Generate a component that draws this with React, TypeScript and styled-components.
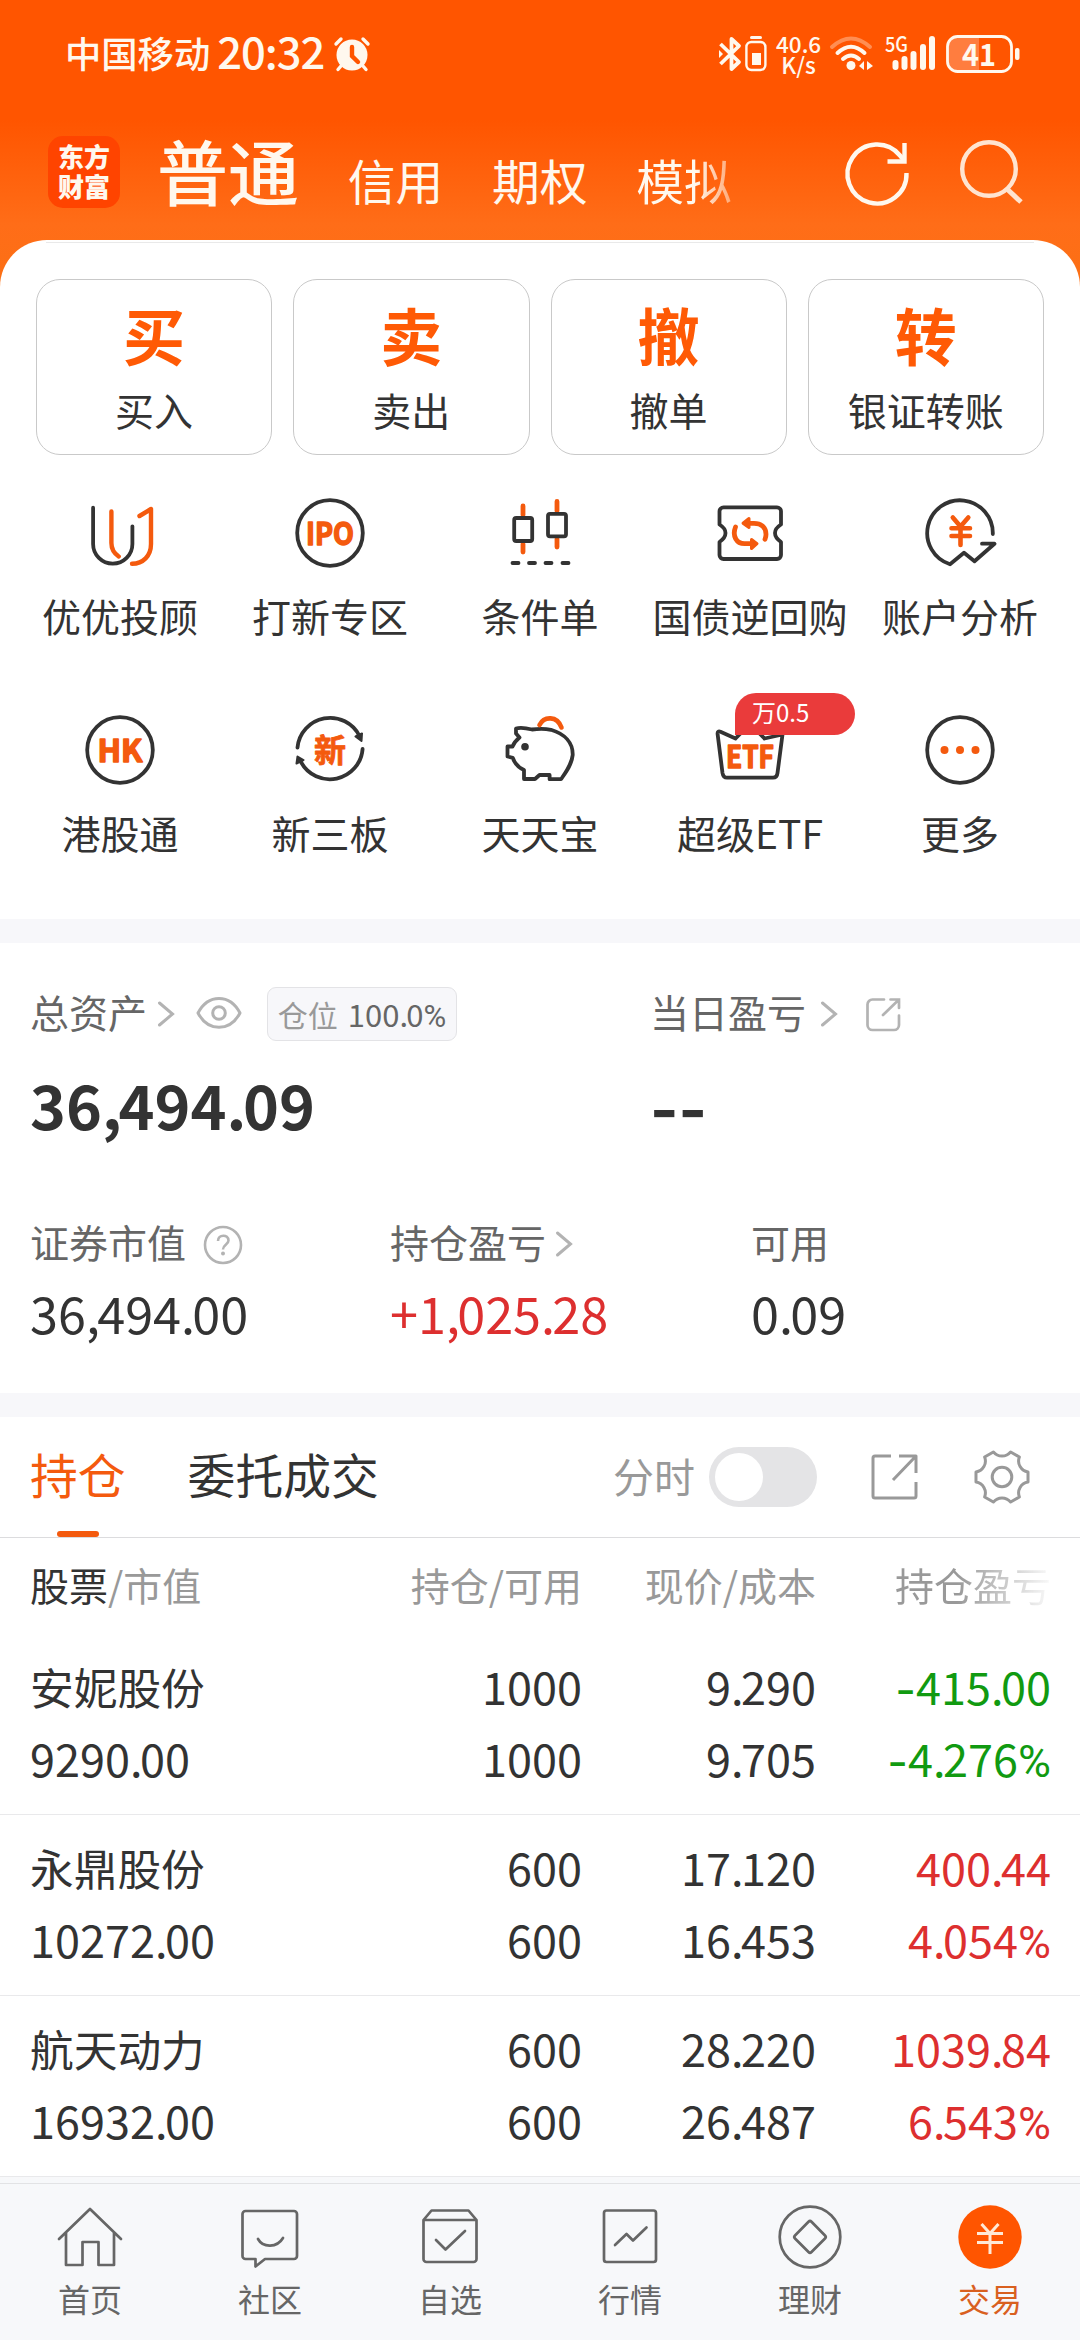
import React from "react";
import styled, { createGlobalStyle } from "styled-components";

const GlobalStyle = createGlobalStyle`
  * { box-sizing: border-box; }
  body {
    margin: 0;
    background: #fff;
    font-family: "Noto Sans CJK SC", "Noto Sans", sans-serif;
    color: #333;
  }
  svg { overflow: visible; flex: none; }
`;

const ORANGE = "#f45a0e";
const DARK = "#333";

/* ---------- page shell ---------- */

const Page = styled.div`
  width: 1080px;
  height: 2340px;
  overflow: hidden;
  display: flex;
  flex-direction: column;
  background: linear-gradient(#ff5500 0, #ff5500 120px, #ff6d18 225px, #fb7014 290px) no-repeat top / 100% 290px;
`;

const StatusBar = styled.header`
  height: 108px;
  flex: none;
  display: flex;
  align-items: center;
  justify-content: space-between;
  padding: 0 59px 0 65px;
  color: #fff8ee;
`;

const StatusGroup = styled.div`
  display: flex;
  align-items: center;
`;

const Carrier = styled.span`
  font-size: 36.3px;
  font-weight: 500;
  line-height: 50px;
  margin: -4px 7px 0 0;
`;

const Clock = styled.span`
  font-size: 43.5px;
  font-weight: 500;
  line-height: 50px;
  margin: -6px 10px 0 0;
  letter-spacing: -1px;
`;

const NetSpeed = styled.div`
  width: 45px;
  margin: -1px 8px 0 9px;
  font-size: 22.5px;
  font-weight: 500;
  line-height: 21px;
  text-align: center;
`;

const Nav = styled.nav`
  height: 132px;
  flex: none;
  display: flex;
  align-items: flex-start;
  padding: 28px 55px 0 48px;
  color: #fff8ee;
`;

const Logo = styled.div`
  width: 72px;
  height: 72px;
  border-radius: 15px;
  background: #ff4400;
  padding-top: 5px;
  text-align: center;
  font-size: 26px;
  font-weight: 900;
  line-height: 30px;
`;

const NavTabs = styled.div`
  display: flex;
  align-items: baseline;
  width: 580px;
  margin: -17px 0 0 37px;
  white-space: nowrap;
`;

const NavTab = styled.span<{ $active?: boolean; $fade?: boolean }>`
  font-size: ${(p) => (p.$active ? 71 : 47.8)}px;
  font-weight: ${(p) => (p.$active ? 500 : 400)};
  line-height: 100px;
  margin-right: 48.7px;
  ${(p) =>
    p.$fade &&
    `background: linear-gradient(90deg, #fff8ee 62%, rgba(255, 248, 238, 0.45) 100%);
     background-clip: text; color: transparent;`}
`;

const NavIcons = styled.div`
  display: flex;
  margin-left: auto;
  gap: 49px;
`;

/* ---------- main panel ---------- */

const Panel = styled.main`
  flex: 1;
  background: #fff;
  border-radius: 47px 47px 0 0;
  display: flex;
  flex-direction: column;
`;

const Hairline = styled.div`
  height: 1px;
  margin: 2px 46px 0;
  background: #e9e9e9;
  flex: none;
`;

const Actions = styled.section`
  display: grid;
  grid-template-columns: repeat(4, 1fr);
  gap: 21px;
  padding: 36px 36px 0;
`;

const ActionCard = styled.button`
  height: 176px;
  border: 1px solid #c9c9c9;
  border-radius: 24px;
  background: #fff;
  padding: 18px 0 0;
  display: flex;
  flex-direction: column;
  align-items: center;
  font-family: inherit;
  color: ${DARK};
`;

const ActionGlyph = styled.span`
  font-size: 62px;
  font-weight: 700;
  line-height: 72px;
  color: #ff5a05;
`;

const Label = styled.span`
  font-size: 39px;
  line-height: 50px;
  white-space: nowrap;
`;

const ActionLabel = styled(Label)`
  margin-top: 14px;
`;

const Shortcuts = styled.section`
  display: grid;
  grid-template-columns: repeat(5, 210px);
  grid-auto-rows: 217px;
  justify-content: center;
  height: 464px;
  padding-top: 39px;
  flex: none;
`;

const Shortcut = styled.div`
  display: flex;
  flex-direction: column;
  align-items: center;
  gap: 18px;
  position: relative;
`;

const DiscountTag = styled.span`
  position: absolute;
  left: 90px;
  top: -18px;
  width: 120px;
  height: 42px;
  border-radius: 21px 21px 21px 0;
  background: #ea3b3b;
  color: #fff;
  font-size: 24px;
  line-height: 38px;
  padding-left: 17px;
`;

const Band = styled.div`
  height: 24px;
  background: #f7f7fa;
  flex: none;
`;

/* ---------- figures ---------- */

const Tight = styled.span`
  letter-spacing: -0.055em;
`;

const PercentSign = styled.span`
  font-family: Roboto, sans-serif;
  line-height: 0;
`;

const MinusSign = styled.span`
  font-family: Inter, sans-serif;
  line-height: 0;
  vertical-align: -0.03em;
`;

const Num = ({ children }: { children: string }) => (
  <span>
    {children.split(/([.,%-])/).map((part, i) => {
      if (part === "." || part === ",") return <Tight key={i}>{part}</Tight>;
      if (part === "%") return <PercentSign key={i}>{part}</PercentSign>;
      if (part === "-") return <MinusSign key={i}>{part}</MinusSign>;
      return part;
    })}
  </span>
);

/* ---------- assets ---------- */

const Assets = styled.section`
  height: 450px;
  flex: none;
  padding: 43px 30px 0;
`;

const TotalRow = styled.div`
  display: grid;
  grid-template-columns: 620px 1fr;
  height: 158px;
`;

const SummaryRow = styled.div`
  display: grid;
  grid-template-columns: 360px 361px 1fr;
  margin-top: 72px;
`;

const FieldHead = styled.div`
  height: 56px;
  display: flex;
  align-items: center;
  color: #666;
`;

const FieldName = styled(Label)`
  margin-top: -6px;
`;

const PositionChip = styled.span`
  width: 190px;
  height: 54px;
  margin-left: 25px;
  border: 1px solid #e3e3e6;
  border-radius: 9px;
  background: #f7f7fa;
  display: flex;
  align-items: center;
  justify-content: center;
  gap: 10px;
  font-size: 31px;
  line-height: 48px;
  color: #666;
  padding-bottom: 1px;
`;

const ChipName = styled.span`
  font-size: 30px;
  color: #999;
`;

const Total = styled.div`
  font-size: 61px;
  font-weight: 700;
  line-height: 80px;
  margin-top: 22px;
`;

const Amount = styled.div<{ $color?: string }>`
  font-size: 50.4px;
  line-height: 66px;
  margin-top: 8px;
  color: ${(p) => p.$color ?? DARK};
`;

/* ---------- holdings ---------- */

const TabsRow = styled.div`
  height: 121px;
  flex: none;
  border-bottom: 1px solid #dcdcde;
  display: flex;
  align-items: center;
  padding: 0 49px 0 30px;
`;

const Tab = styled.div<{ $active?: boolean }>`
  height: 120px;
  font-size: 47.8px;
  line-height: 114px;
  margin-right: 62px;
  color: ${(p) => (p.$active ? ORANGE : DARK)};
  display: flex;
  flex-direction: column;
  align-items: center;
`;

const TabMark = styled.i`
  width: 42px;
  height: 6px;
  border-radius: 3px;
  background: ${ORANGE};
`;

const Tools = styled.div`
  display: flex;
  align-items: center;
  margin-left: auto;
`;

const ToolLabel = styled.span`
  font-size: 41px;
  line-height: 60px;
  margin: -5px 14px 0 0;
  color: #999;
`;

const Switch = styled.span`
  width: 108px;
  height: 60px;
  border-radius: 30px;
  background: #e4e4e6;
  padding: 6px;
  margin-right: 54px;
`;

const Knob = styled.i`
  display: block;
  width: 48px;
  height: 48px;
  border-radius: 50%;
  background: #fff;
`;

const columns = `
  display: grid;
  grid-template-columns: 280px 272px 234px 235px;
  padding-left: 30px;
`;

const TableHead = styled.div`
  ${columns}
  height: 96px;
  flex: none;
  font-size: 39px;
  line-height: 92px;
  color: #999;
`;

const HeadCell = styled.span<{ $fade?: boolean }>`
  text-align: right;
  white-space: nowrap;
  ${(p) =>
    p.$fade &&
    `background: linear-gradient(90deg, #999 60%, rgba(153, 153, 153, 0.05) 100%);
     background-clip: text; color: transparent;`}
`;

const StockHead = styled.span`
  b { font-weight: 400; color: ${DARK}; }
`;

const HoldingRow = styled.div`
  ${columns}
  height: 181px;
  flex: none;
  padding-top: 16px;
  border-bottom: 1px solid #e9e9eb;
  font-size: 45px;
  line-height: 72px;
`;

const Cell = styled.div<{ $color?: string; $left?: boolean }>`
  display: flex;
  flex-direction: column;
  align-items: ${(p) => (p.$left ? "flex-start" : "flex-end")};
  color: ${(p) => p.$color ?? DARK};
`;

const StockName = styled.span`
  font-size: 43.7px;
`;

/* ---------- bottom bar ---------- */

const BottomBar = styled.footer`
  height: 163px;
  flex: none;
  background: #f7f8fa;
  padding-top: 6px;
`;

const BottomItems = styled.div`
  border-top: 1px solid #e2e3e5;
  height: 157px;
  display: grid;
  grid-template-columns: repeat(6, 180px);
`;

const BottomItem = styled.div<{ $active?: boolean }>`
  display: flex;
  flex-direction: column;
  align-items: center;
  padding-top: 19px;
  font-size: 32px;
  line-height: 44px;
  color: ${(p) => (p.$active ? "#d9601f" : "#666")};
  svg { margin-bottom: 3px; }
`;

/* ---------- icons ---------- */

const AlarmIcon = () => (
  <svg width="36" height="36" viewBox="0 0 36 36" fill="none" stroke="currentColor" strokeLinecap="round">
    <circle cx="18" cy="19" r="15.5" fill="currentColor" stroke="none" />
    <path d="M2 8L7 3M34 8L29 3M7 30L4 33.5M29 30L32 33.5" strokeWidth="3.4" />
    <path d="M18 11V20L24 26" stroke="#ff5500" strokeWidth="4.4" />
  </svg>
);

const BluetoothIcon = () => (
  <svg width="23" height="36" viewBox="0 0 23 36" fill="none" stroke="currentColor" strokeWidth="3.8" strokeLinejoin="round">
    <path d="M1.500 8L20 26L12.500 33V3L20 10L1.500 28" />
    <path d="M0 14L4 18L0 22Z" fill="currentColor" stroke="none" />
  </svg>
);

const DeviceBatteryIcon = () => (
  <svg width="22" height="36" viewBox="0 0 22 36" style={{ marginLeft: 3 }}>
    <rect x="5" y="0" width="12" height="3" rx="1.5" fill="currentColor" />
    <rect x="1.4" y="6" width="19" height="28" rx="5" fill="none" stroke="currentColor" strokeWidth="2.4" />
    <rect x="7" y="17" width="9" height="12" fill="currentColor" />
  </svg>
);

const WifiIcon = () => (
  <svg width="46" height="36" viewBox="0 0 46 36" fill="none" stroke="currentColor" strokeWidth="4" strokeLinecap="round">
    <path d="M3 11Q22 -6 41 11" opacity=".35" />
    <path d="M8.500 17Q22 4.500 35.500 17" />
    <path d="M14 23Q22 16 30 23" />
    <circle cx="22" cy="29.500" r="4.500" fill="currentColor" stroke="none" />
    <path d="M30 30L35 25V34ZM44 30L38 25V34Z" fill="currentColor" stroke="none" />
  </svg>
);

const SignalIcon = () => (
  <svg width="52" height="38" viewBox="0 0 52 38" fill="currentColor" style={{ margin: "0 9px 0 10px" }}>
    <text x="0" y="17" fontSize="21" fontWeight="500" textLength="23" lengthAdjust="spacingAndGlyphs">5G</text>
    <rect x="7.500" y="25" width="6" height="10" rx="3" />
    <rect x="16.500" y="21" width="6" height="14" rx="3" />
    <rect x="25.500" y="16" width="6" height="19" rx="3" />
    <rect x="35" y="9" width="6" height="26" rx="3" />
    <rect x="44" y="1" width="6" height="34" rx="3" />
  </svg>
);

const BatteryIcon = () => (
  <svg width="75" height="38" viewBox="0 0 75 38">
    <path d="M12 2H33V36H12A10 10 0 0 1 2 26V12A10 10 0 0 1 12 2Z" fill="#ff7d3f" />
    <rect x="1.500" y="1.500" width="64" height="35" rx="10" fill="none" stroke="currentColor" strokeWidth="2.800" />
    <rect x="69" y="13" width="4.500" height="12" rx="2" fill="currentColor" />
    <text x="33" y="30.500" textAnchor="middle" fontSize="31" fontWeight="700" fill="currentColor" textLength="34" lengthAdjust="spacingAndGlyphs">41</text>
  </svg>
);

const RefreshIcon = () => (
  <svg width="64" height="66" viewBox="0 0 64 66" fill="none" stroke="currentColor" strokeWidth="4.400" style={{ marginTop: 4 }}>
    <path d="M60.500 33A29.500 29.500 0 1 1 54 15.500L58.500 21" />
    <path d="M58.500 3V21.500H41.500" />
  </svg>
);

const SearchIcon = () => (
  <svg width="66" height="66" viewBox="0 0 66 66" fill="none" stroke="#ffe4d0" strokeWidth="4.400" style={{ marginTop: 3 }}>
    <circle cx="30" cy="30" r="26.800" />
    <path d="M48 50L62 63" strokeWidth="5" />
  </svg>
);

const Glyph = ({ children }: { children: React.ReactNode }) => (
  <svg width="78" height="78" viewBox="0 0 78 78" fill="none" stroke={DARK} strokeWidth="3.800" strokeLinecap="round" strokeLinejoin="round">
    {children}
  </svg>
);

const Word = ({ text, y, width, size = 31, spread = 1.5 }: { text: string; y: number; width: number; size?: number; spread?: number }) => (
  <text
    x={39 - width / 2}
    y={y}
    fontSize={size}
    fontWeight="700"
    fill={ORANGE}
    stroke={ORANGE}
    strokeWidth={spread}
    textLength={width}
    lengthAdjust="spacingAndGlyphs"
  >
    {text}
  </text>
);

const AdvisorIcon = () => (
  <Glyph>
    <path d="M12.100 13.700V50a19.650 19.650 0 0 0 39.300 0V32.300" />
    <path d="M30.400 17.500V49c0 6 3 10.500 7.300 13.500M58.500 22L70 15V50c0 12-8 19.700-19 19.700" stroke={ORANGE} strokeWidth="4.400" />
  </Glyph>
);

const IpoIcon = () => (
  <Glyph>
    <circle cx="39" cy="39" r="32.800" />
    <Word text="IPO" y={50.5} width={48} />
  </Glyph>
);

const CandleIcon = () => (
  <Glyph>
    <path d="M22 12V21M22 50V58M56 7.500V17M56 45V53" stroke={ORANGE} strokeWidth="4.800" />
    <rect x="13.200" y="24" width="18" height="23" rx="2" />
    <rect x="47" y="19.800" width="18" height="22.500" rx="2" />
    <path d="M11.500 69H17.500M28 69H34M44.500 69H50.500M61.500 69H67.500" />
  </Glyph>
);

const RepoIcon = () => (
  <Glyph>
    <path d="M12.500 13.300H66a4 4 0 0 1 4 4V30.500c-8 5-8 12 0 17.500V61a4 4 0 0 1-4 4H12.500a4 4 0 0 1-4-4V48c8-5.500 8-12.500 0-17.500V17.300a4 4 0 0 1 4-4Z" />
    <g stroke={ORANGE} strokeWidth="4.800">
      <path d="M38 29.300H43c8 0 12 5 12 11 0 2-.3 3.500-1 5M24.500 33c-3.500 9 1 16.700 9 16.700H41" />
      <path d="M38 24.500L32 29.200L38 33.500ZM40.500 45.500L46 49.700L40.500 54.500Z" fill={ORANGE} strokeWidth="3" />
    </g>
  </Glyph>
);

const AccountIcon = () => (
  <Glyph>
    <path d="M71.800 40A32.800 32.800 0 1 0 29 70.300L43 58.700L53.500 67.300L73.500 49.700H61" />
    <path d="M31.800 23.500L39.500 32.500L47.300 23.500M39.500 33V51M30.500 34.200H49M30.500 42H49" stroke={ORANGE} strokeWidth="4.600" />
  </Glyph>
);

const HkIcon = () => (
  <Glyph>
    <circle cx="39" cy="39" r="32.800" />
    <Word text="HK" y={50.5} width={45} />
  </Glyph>
);

const NewBoardIcon = () => (
  <Glyph>
    <path d="M6.500 36.500A32.800 32.800 0 0 1 68.500 25M71.600 38A32.800 32.800 0 0 1 10 51" />
    <path d="M64.500 25.500L71 22.500L70.500 30ZM6.500 45.500L12.500 49L5.500 52.500Z" fill={DARK} strokeWidth="2" />
    <Word text="新" y={50.5} width={32} size={32} spread={0.8} />
  </Glyph>
);

const PigIcon = () => (
  <Glyph>
    <path d="M15 17.500C20 16 27 17.500 31 18.500C38 17.500 44 17.500 50 18.800C64 23 72 32 71.700 44C70.500 54 65 61 60 68.200H48.600V64H38.500L34 68H23V59C17.500 56.500 13.500 52 11.800 46.800L6.500 45.500V35.500H11.500C13 31.500 15.500 29 18.500 26.500L15 22.500Z" />
    <circle cx="24" cy="35.700" r="3.800" fill={DARK} stroke="none" />
    <path d="M38.500 14C43 5 56 4.500 60.500 16.500" stroke={ORANGE} strokeWidth="4.600" />
  </Glyph>
);

const EtfIcon = () => (
  <Glyph>
    <path d="M24.500 27.500L9.500 20.800Q6.300 19.700 6.600 23L11.500 62Q12.200 66.700 16 66.700H62Q66 66.700 66.500 62L71.500 23.500L53.500 27.500M24.500 27.500L39 13L53.500 27.500" />
    <Word text="ETF" y={57} width={48} />
  </Glyph>
);

const MoreIcon = () => (
  <Glyph>
    <circle cx="39" cy="39" r="32.800" />
    <g fill={ORANGE} stroke="none">
      <circle cx="23.500" cy="39" r="4" />
      <circle cx="39" cy="39" r="4" />
      <circle cx="54.500" cy="39" r="4" />
    </g>
  </Glyph>
);

const Chevron = ({ gap }: { gap: number }) => (
  <svg width="18" height="28" viewBox="0 0 18 28" fill="none" stroke="#b3b3b3" strokeWidth="3" strokeLinecap="round" style={{ marginLeft: gap }}>
    <path d="M2.500 3L15.500 14L2.500 25" />
  </svg>
);

const EyeIcon = () => (
  <svg width="46" height="34" viewBox="0 0 46 34" fill="none" stroke="#b3b3b3" strokeWidth="3" strokeLinejoin="round" style={{ margin: "-2px 0 0 21px" }}>
    <path d="M2 17C12-2.500 34-2.500 44 17C34 36 12 36 2 17Z" />
    <circle cx="23" cy="17" r="6.300" />
  </svg>
);

const HelpIcon = () => (
  <svg width="40" height="40" viewBox="0 0 40 40" fill="none" stroke="#b3b3b3" strokeWidth="2.600" style={{ margin: "1px 0 0 17px" }}>
    <circle cx="20" cy="20" r="18" />
    <path d="M15 16C15 9 25.500 9 25.500 15.500C25.500 19.500 20 19.500 20 24.500" />
    <circle cx="20" cy="28.500" r="2" fill="#b3b3b3" stroke="none" />
  </svg>
);

const ShareSmallIcon = () => (
  <svg width="36" height="36" viewBox="0 0 36 36" fill="none" stroke="#b3b3b3" strokeWidth="2.700" strokeLinecap="round" style={{ margin: "1px 0 0 27px" }}>
    <path d="M19 2.500H7.500a5 5 0 0 0-5 5V28a5 5 0 0 0 5 5H29a5 5 0 0 0 5-5V18.500M25.500 2.500H34V11M33.500 3L18 18" />
  </svg>
);

const ShareIcon = () => (
  <svg width="48" height="48" viewBox="0 0 48 48" fill="none" stroke="#999" strokeWidth="3" strokeLinejoin="round">
    <path d="M20 3H4a2 2 0 0 0-2 2V43a2 2 0 0 0 2 2H43a2 2 0 0 0 2-2V29M28 3H45V20M45 3L22 27" />
  </svg>
);

/* Six flat lobes joined by concave arcs. */
const gearOutline = (() => {
  const at = (deg: number) => {
    const a = (deg * Math.PI) / 180;
    return `${(29 + 26.5 * Math.cos(a)).toFixed(2)} ${(29 + 26.5 * Math.sin(a)).toFixed(2)}`;
  };
  let d = `M${at(-11)}`;
  for (let i = 0; i < 6; i++) {
    d += `L${at(i * 60 + 11)}A11 11 0 0 0 ${at(i * 60 + 49)}`;
  }
  return d + "Z";
})();

const GearIcon = () => (
  <svg width="58" height="58" viewBox="0 0 58 58" fill="none" stroke="#999" strokeWidth="3" strokeLinejoin="round" style={{ marginLeft: 54 }}>
    <path d={gearOutline} />
    <circle cx="29" cy="29" r="9.800" />
  </svg>
);

const BarGlyph = ({ children }: { children: React.ReactNode }) => (
  <svg width="70" height="70" viewBox="0 0 70 70" fill="none" stroke="#666" strokeWidth="2.700" strokeLinecap="round" strokeLinejoin="round">
    {children}
  </svg>
);

const HomeIcon = () => (
  <BarGlyph>
    <path d="M4 36L35 6L66 36M11 30V62H27.500V39H43.500V62H59V30" />
  </BarGlyph>
);
const CommunityIcon = () => (
  <BarGlyph>
    <path d="M10.500 8H59a3 3 0 0 1 3 3V53a3 3 0 0 1-3 3H30L20.500 63.500V56H10.500a3 3 0 0 1-3-3V11a3 3 0 0 1 3-3Z" />
    <path d="M23 36C28 45 42 45 48 35" />
  </BarGlyph>
);
const WatchIcon = () => (
  <BarGlyph>
    <path d="M8.500 17L16.500 7.500H53.500L61.500 17V56a3 3 0 0 1-3 3H11.500a3 3 0 0 1-3-3ZM8.500 17H61.500M21 37L30.500 46.500L50 28" />
  </BarGlyph>
);
const MarketIcon = () => (
  <BarGlyph>
    <rect x="9" y="7.500" width="52" height="51.500" rx="2.500" />
    <path d="M20 42L31.500 31L38 37.500L51.500 24.500" />
  </BarGlyph>
);
const WealthIcon = () => (
  <BarGlyph>
    <circle cx="35" cy="34" r="30.300" />
    <path d="M36.500 18.800L50 32.500Q51.500 34 50 35.500L36.500 49Q35 50.500 33.500 49L20 35.500Q18.500 34 20 32.500L33.500 18.800Q35 17.300 36.500 18.800Z" />
  </BarGlyph>
);
const TradeIcon = () => (
  <BarGlyph>
    <circle cx="35" cy="34" r="31.700" fill="#ff5500" stroke="none" />
    <path d="M26.500 21L35 30.500L43.500 21M35 30.500V51M22 30.500H48M22 39.500H48" stroke="#ffe9d6" strokeWidth="3" strokeLinecap="butt" />
  </BarGlyph>
);

/* ---------- data ---------- */

const actions = [
  ["买", "买入"],
  ["卖", "卖出"],
  ["撤", "撤单"],
  ["转", "银证转账"],
];

const shortcuts: { icon: React.FC; label: string; tag?: string }[] = [
  { icon: AdvisorIcon, label: "优优投顾" },
  { icon: IpoIcon, label: "打新专区" },
  { icon: CandleIcon, label: "条件单" },
  { icon: RepoIcon, label: "国债逆回购" },
  { icon: AccountIcon, label: "账户分析" },
  { icon: HkIcon, label: "港股通" },
  { icon: NewBoardIcon, label: "新三板" },
  { icon: PigIcon, label: "天天宝" },
  { icon: EtfIcon, label: "超级ETF", tag: "万0.5" },
  { icon: MoreIcon, label: "更多" },
];

const RED = "#dd2f2f";
const GREEN = "#119a11";

const holdings = [
  { name: "安妮股份", value: "9290.00", held: "1000", free: "1000", price: "9.290", cost: "9.705", gain: "-415.00", rate: "-4.276%", color: GREEN },
  { name: "永鼎股份", value: "10272.00", held: "600", free: "600", price: "17.120", cost: "16.453", gain: "400.44", rate: "4.054%", color: RED },
  { name: "航天动力", value: "16932.00", held: "600", free: "600", price: "28.220", cost: "26.487", gain: "1039.84", rate: "6.543%", color: RED },
];

const bottomItems: { icon: React.FC; label: string; active?: boolean }[] = [
  { icon: HomeIcon, label: "首页" },
  { icon: CommunityIcon, label: "社区" },
  { icon: WatchIcon, label: "自选" },
  { icon: MarketIcon, label: "行情" },
  { icon: WealthIcon, label: "理财" },
  { icon: TradeIcon, label: "交易", active: true },
];

export default function App() {
  return (
    <>
      <GlobalStyle />
      <Page>
        <StatusBar>
          <StatusGroup>
            <Carrier>中国移动</Carrier>
            <Clock>20:32</Clock>
            <AlarmIcon />
          </StatusGroup>
          <StatusGroup>
            <BluetoothIcon />
            <DeviceBatteryIcon />
            <NetSpeed>
              40.6
              <br />
              K/s
            </NetSpeed>
            <WifiIcon />
            <SignalIcon />
            <BatteryIcon />
          </StatusGroup>
        </StatusBar>
        <Nav>
          <Logo>
            东方
            <br />
            财富
          </Logo>
          <NavTabs>
            <NavTab $active>普通</NavTab>
            <NavTab>信用</NavTab>
            <NavTab>期权</NavTab>
            <NavTab $fade>模拟</NavTab>
          </NavTabs>
          <NavIcons>
            <RefreshIcon />
            <SearchIcon />
          </NavIcons>
        </Nav>
        <Panel>
          <Hairline />
          <Actions>
            {actions.map(([glyph, label]) => (
              <ActionCard key={label}>
                <ActionGlyph>{glyph}</ActionGlyph>
                <ActionLabel>{label}</ActionLabel>
              </ActionCard>
            ))}
          </Actions>
          <Shortcuts>
            {shortcuts.map(({ icon: Icon, label, tag }) => (
              <Shortcut key={label}>
                <Icon />
                <Label>{label}</Label>
                {tag && <DiscountTag>{tag}</DiscountTag>}
              </Shortcut>
            ))}
          </Shortcuts>
          <Band />
          <Assets>
            <TotalRow>
              <div>
                <FieldHead>
                  <FieldName>总资产</FieldName>
                  <Chevron gap={10} />
                  <EyeIcon />
                  <PositionChip>
                    <ChipName>仓位</ChipName>
                    <Num>100.0%</Num>
                  </PositionChip>
                </FieldHead>
                <Total>
                  <Num>36,494.09</Num>
                </Total>
              </div>
              <div>
                <FieldHead>
                  <FieldName>当日盈亏</FieldName>
                  <Chevron gap={14} />
                  <ShareSmallIcon />
                </FieldHead>
                <Total>
                  <MinusSign>--</MinusSign>
                </Total>
              </div>
            </TotalRow>
            <SummaryRow>
              <div>
                <FieldHead>
                  <FieldName>证券市值</FieldName>
                  <HelpIcon />
                </FieldHead>
                <Amount>
                  <Num>36,494.00</Num>
                </Amount>
              </div>
              <div>
                <FieldHead>
                  <FieldName>持仓盈亏</FieldName>
                  <Chevron gap={9} />
                </FieldHead>
                <Amount $color={RED}>
                  <Num>+1,025.28</Num>
                </Amount>
              </div>
              <div>
                <FieldHead>
                  <FieldName>可用</FieldName>
                </FieldHead>
                <Amount>
                  <Num>0.09</Num>
                </Amount>
              </div>
            </SummaryRow>
          </Assets>
          <Band />
          <TabsRow>
            <Tab $active>
              持仓
              <TabMark />
            </Tab>
            <Tab>委托成交</Tab>
            <Tools>
              <ToolLabel>分时</ToolLabel>
              <Switch>
                <Knob />
              </Switch>
              <ShareIcon />
              <GearIcon />
            </Tools>
          </TabsRow>
          <TableHead>
            <StockHead>
              <b>股票</b>/市值
            </StockHead>
            <HeadCell>持仓/可用</HeadCell>
            <HeadCell>现价/成本</HeadCell>
            <HeadCell $fade>持仓盈亏</HeadCell>
          </TableHead>
          {holdings.map((h) => (
            <HoldingRow key={h.name}>
              <Cell $left>
                <StockName>{h.name}</StockName>
                <Num>{h.value}</Num>
              </Cell>
              <Cell>
                <Num>{h.held}</Num>
                <Num>{h.free}</Num>
              </Cell>
              <Cell>
                <Num>{h.price}</Num>
                <Num>{h.cost}</Num>
              </Cell>
              <Cell $color={h.color}>
                <Num>{h.gain}</Num>
                <Num>{h.rate}</Num>
              </Cell>
            </HoldingRow>
          ))}
          <BottomBar>
            <BottomItems>
              {bottomItems.map(({ icon: Icon, label, active }) => (
                <BottomItem key={label} $active={active}>
                  <Icon />
                  {label}
                </BottomItem>
              ))}
            </BottomItems>
          </BottomBar>
        </Panel>
      </Page>
    </>
  );
}
